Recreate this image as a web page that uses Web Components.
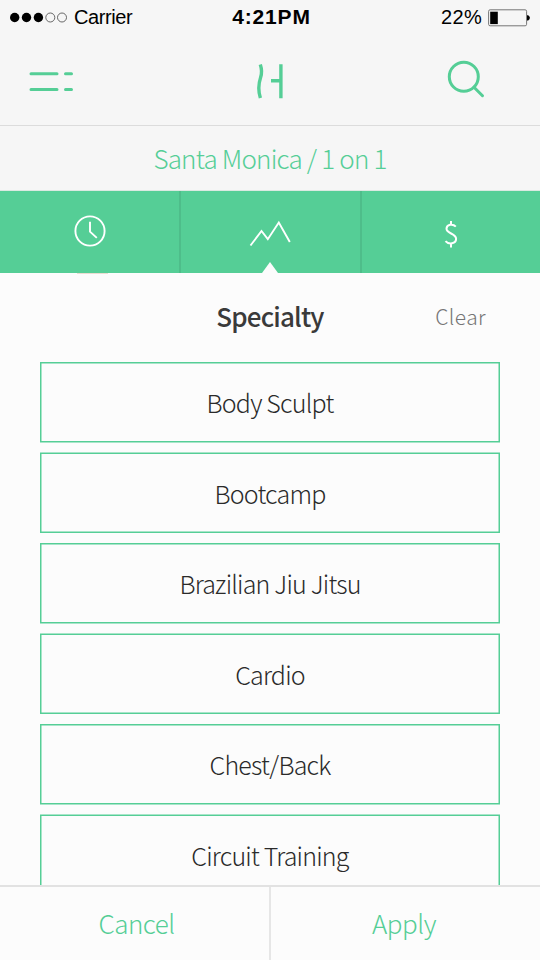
<!DOCTYPE html>
<html lang="en">
<head>
<meta charset="utf-8">
<title>Specialty</title>
<style>
  html, body { margin: 0; height: 100%; }
  body { overflow: hidden; }
</style>
</head>
<body>
<trainer-filter></trainer-filter>
<script>
const define = (name, html) => {
  const template = document.createElement('template');
  template.innerHTML = html;
  customElements.define(name, class extends HTMLElement {
    constructor() {
      super();
      this.attachShadow({ mode: 'open' }).append(template.content.cloneNode(true));
    }
  });
};

define('status-bar', `
  <style>
    :host { display: grid; grid-template-columns: 1fr auto 1fr; align-items: start; height: 35px; flex: none;
      font: 20px/35px "Liberation Sans", Arial, sans-serif; color: #000; }
    .left { display: flex; align-items: center; gap: 6px; padding-left: 9px; letter-spacing: -.4px; }
    .right { display: flex; align-items: center; justify-content: flex-end; gap: 6px; padding-right: 10px; }
    .time { font-weight: 700; font-size: 21px; letter-spacing: .85px; padding-left: 3px; line-height: 34px; }
    .right span { letter-spacing: .3px; }
    svg { display: block; }
  </style>
  <div class="left">
    <svg width="59" height="13" viewBox="0 0 59 13">
      <circle cx="5.7" cy="6.5" r="4.7"/><circle cx="17.5" cy="6.5" r="4.7"/><circle cx="29.4" cy="6.5" r="4.7"/>
      <g fill="none" stroke="#444" stroke-width=".8"><circle cx="41.3" cy="6.5" r="4.5"/><circle cx="53" cy="6.5" r="4.5"/></g>
    </svg>
    <span>Carrier</span>
  </div>
  <span class="time">4:21PM</span>
  <div class="right">
    <span>22%</span>
    <svg width="42" height="18" viewBox="0 0 42 18">
      <rect x=".6" y=".8" width="38" height="16" rx="1.5" fill="none" stroke="#777"/>
      <rect x="2.2" y="2.7" width="7.6" height="12.4"/>
      <path d="M39 6.2h1.2q1.7 1 1.7 2.6t-1.7 2.6H39z"/>
    </svg>
  </div>`);

define('app-header', `
  <style>
    :host { display: flex; justify-content: space-between; align-items: flex-start; height: 90px; flex: none;
      border-bottom: 1px solid #dcdcdc; box-sizing: content-box; }
    svg { display: block; fill: none; stroke: #55ce96; }
  </style>
  <svg width="180" height="90" viewBox="0 35 180 90" stroke-width="3" stroke-linecap="round">
    <path d="M31 73.8h26M65.5 73.8h6M31 89.5h26M65.5 89.5h6"/>
  </svg>
  <svg width="180" height="90" viewBox="180 35 180 90" stroke-width="3.4">
    <path d="M260.3 64.5c1.5 4.5 2 8 .3 13-2 6-2.6 13 -.2 20.5M280.9 64.3v34M271 80.8h10"/>
  </svg>
  <svg width="180" height="90" viewBox="360 35 180 90" stroke-width="3" stroke-linecap="round">
    <circle cx="463.8" cy="76.8" r="14.5"/><path d="M474 87.2l8.5 8.5"/>
  </svg>`);

define('location-bar', `
  <style>
    :host { display: flex; justify-content: center; height: 64px; flex: none; border-bottom: 1px solid #dbe9e1;
      font-weight: 300; font-size: 26px; line-height: 63px; letter-spacing: -.8px; color: #55ce96; }
  </style><span><slot></slot></span>`);

define('filter-tabs', `
  <style>
    :host { display: flex; height: 82px; flex: none; background: #55ce96; }
    .tab { position: relative; flex: 1; display: flex; justify-content: center; }
    .first { flex: 0 0 179px; border-right: 2px solid #4ebd8a; }
    .mid { flex: 0 0 179px; border-right: 2px solid #4ebd8a; }
    .tab svg { display: block; fill: none; stroke: #fff; }
    .tick { position: absolute; left: 81px; bottom: 0; }
    .first::after { content: ""; position: absolute; left: 77px; top: 82px; width: 31px; height: 1px; background: #ecdcd2; }
  </style>
  <div class="tab first"><svg width="179" height="82" viewBox="0 191 179 82" stroke-width="1.9">
    <circle cx="90" cy="231" r="14.6"/><path d="M90 221.8v9.8l6.8 6.3"/></svg></div>
  <div class="tab mid"><svg width="179" height="82" viewBox="181 191 179 82" stroke-width="1.9">
    <path d="M250.5 245.5l11-14.5 6.3 8.2 11-16.6 11 19.4"/></svg>
    <svg class="tick" width="16" height="12" viewBox="0 0 16 12" style="stroke:none;fill:#fcfcfc"><path d="M0 12L8 1l8 11z"/></svg></div>
  <div class="tab"><svg width="178" height="82" viewBox="362 191 178 82" stroke-width="2">
    <path d="M455.8 226.6c-3-3.3-9.3-2.2-9.3 2.2 0 5.1 9.6 4.3 9.6 10 0 5.1-7.2 6.2-10.6 2.3M451 221v4M451 243.5v4"/></svg></div>`);

define('section-heading', `
  <style>
    :host { display: grid; grid-template-columns: 1fr auto 1fr; height: 89px; flex: none; line-height: 86px; }
    .title { grid-column: 2; font-size: 26px; font-weight: 500; letter-spacing: -.85px; color: #3a3a3a; }
    .action { padding-right: 54px; text-align: right; font-size: 21px; line-height: 87px; font-weight: 300; letter-spacing: .4px; color: #757575; }
  </style>
  <span class="title"><slot></slot></span><span class="action"><slot name="action"></slot></span>`);

define('option-box', `
  <style>
    :host { display: grid; height: 81px; margin: 0 40px 9px; flex: none; font-size: 25px; font-weight: 300; line-height: 81px;
      letter-spacing: -.8px; color: #2a2a2a; }
    :host([even]) { margin-bottom: 10px; line-height: 83px; }
    svg, span { grid-area: 1 / 1; }
    span { text-align: center; }
    svg { display: block; fill: none; stroke: #55ce96; stroke-width: 1.5; }
    :host([even]) rect { transform: translateY(.5px); }
  </style>
  <svg width="460" height="81"><rect x=".75" y=".75" width="458.5" height="79"/></svg>
  <span><slot></slot></span>`);

define('action-bar', `
  <style>
    :host { display: flex; height: 73px; flex: none; border-top: 2px solid #e2e2e2; background: #fcfcfc;
      font-size: 26px; font-weight: 300; letter-spacing: -.5px; line-height: 71px; color: #55ce96; text-align: center; }
    ::slotted(*) { flex: 1; box-sizing: border-box; padding-right: 3px; }
    ::slotted(:first-child) { border-right: 2px solid #e6e6e6; padding: 0 0 0 4px; flex: 0 0 271px; }
  </style><slot></slot>`);

define('trainer-filter', `
  <style>
    :host { display: flex; flex-direction: column; width: 540px; height: 960px; overflow: hidden; background: #f6f6f6;
      font-family: "Noto Sans CJK JP", "Noto Sans", sans-serif; }
    .content { display: flex; flex-direction: column; flex: 1; min-height: 0; overflow: hidden; background: #fcfcfc; }
    filter-tabs { z-index: 1; }
  </style>
  <status-bar></status-bar>
  <app-header></app-header>
  <location-bar>Santa Monica / 1 on 1</location-bar>
  <filter-tabs></filter-tabs>
  <div class="content">
    <section-heading>Specialty<span slot="action">Clear</span></section-heading>
    <option-box>Body Sculpt</option-box>
    <option-box even>Bootcamp</option-box>
    <option-box>Brazilian Jiu Jitsu</option-box>
    <option-box even>Cardio</option-box>
    <option-box>Chest/Back</option-box>
    <option-box even>Circuit Training</option-box>
  </div>
  <action-bar><span>Cancel</span><span>Apply</span></action-bar>`);
</script>
</body>
</html>
